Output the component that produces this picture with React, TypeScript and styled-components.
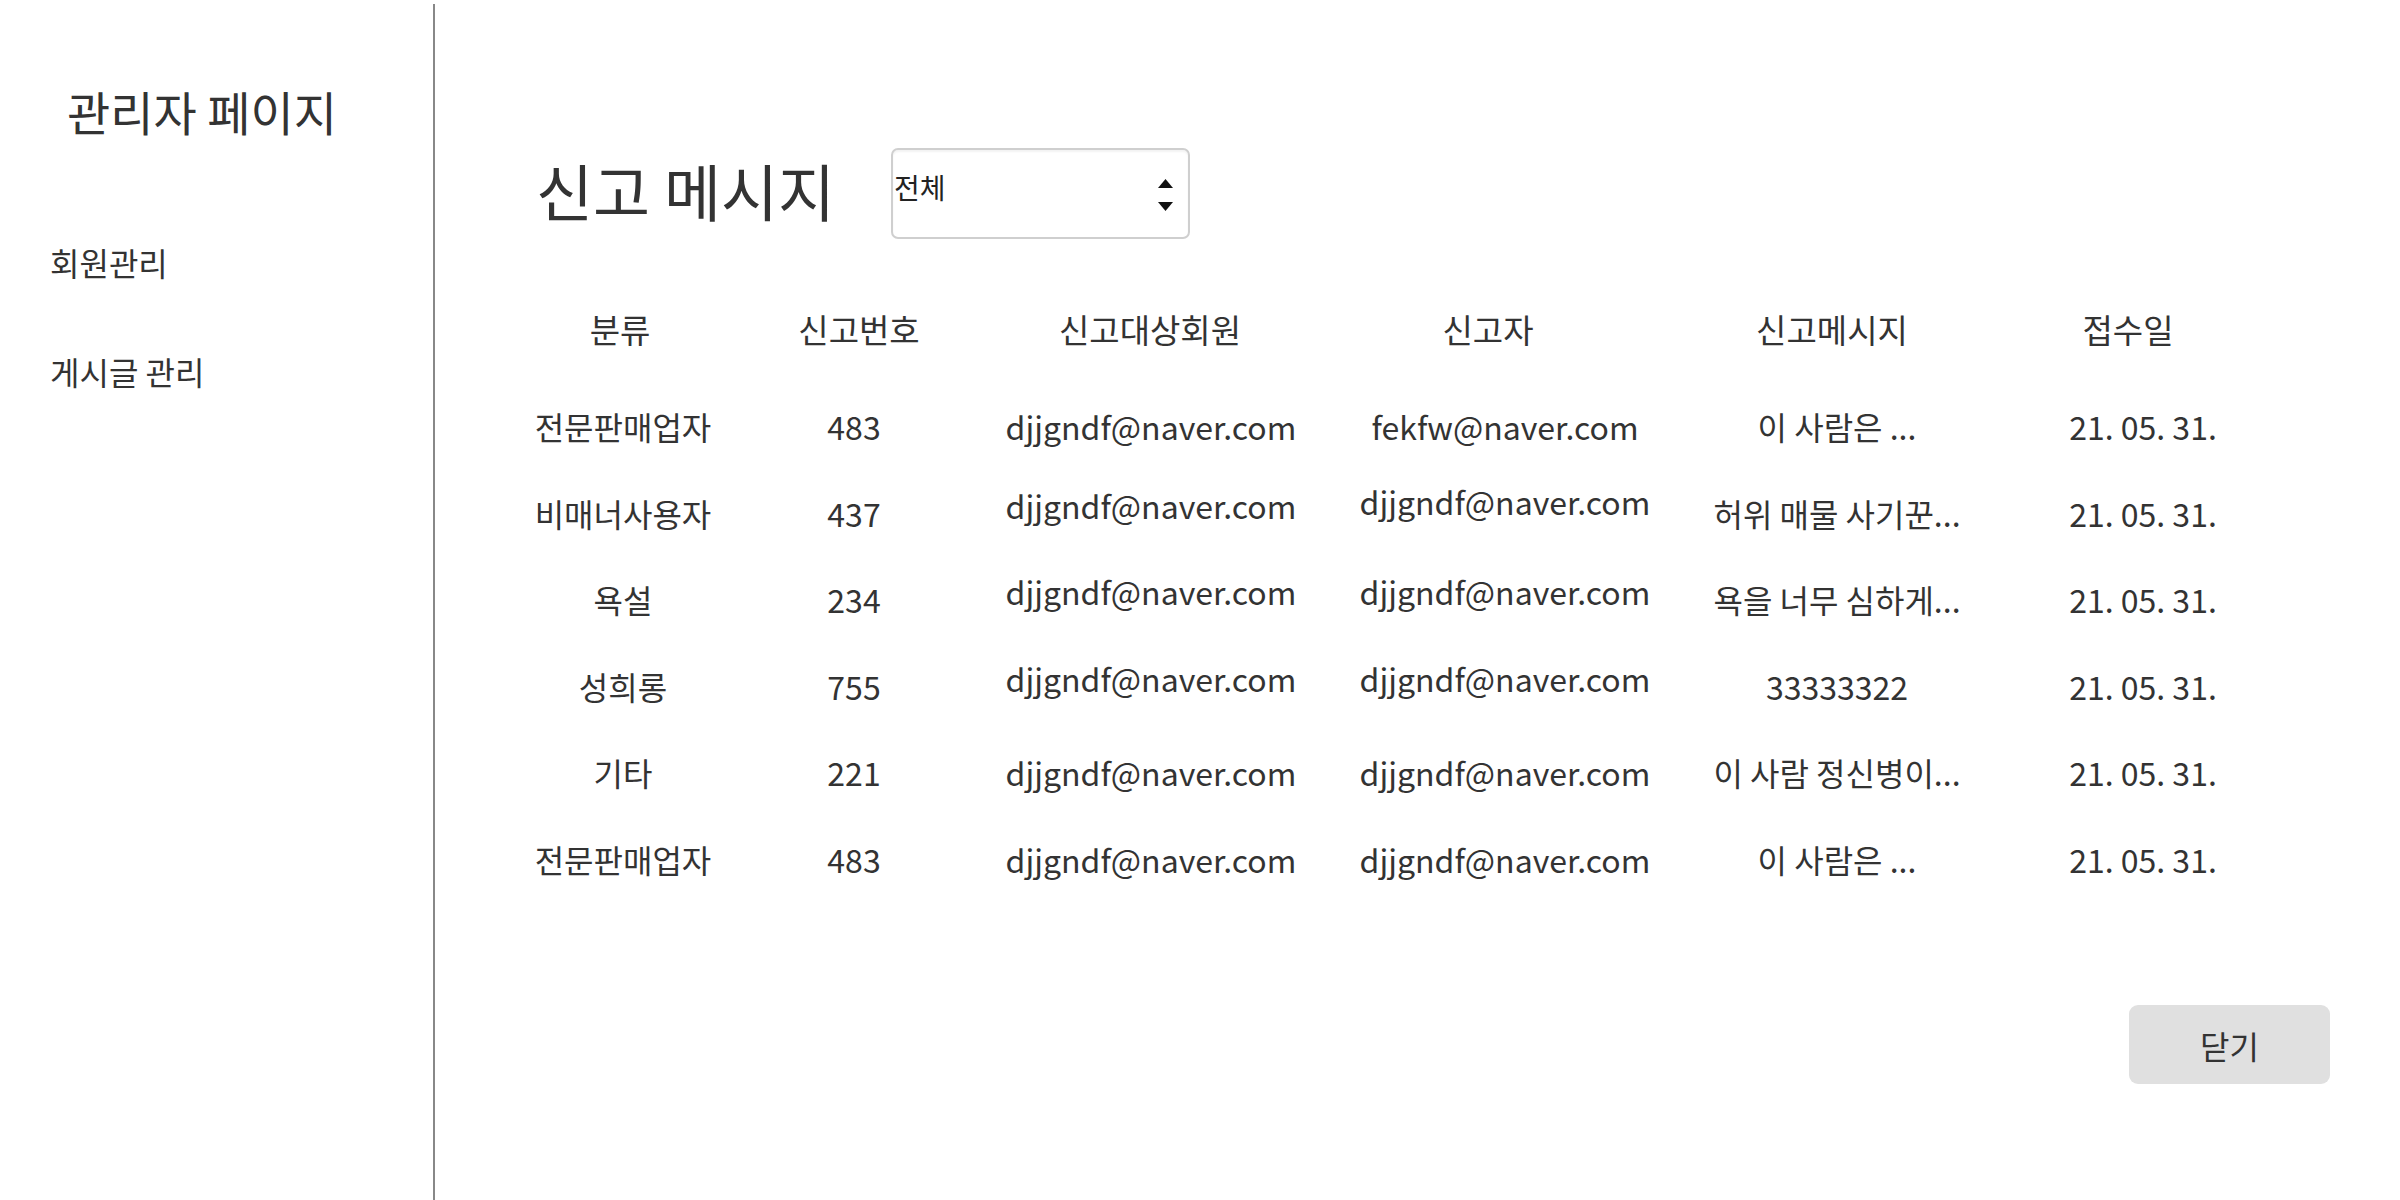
import React from "react";
import styled, { createGlobalStyle } from "styled-components";

const GlobalStyle = createGlobalStyle`
  html, body {
    margin: 0;
    padding: 0;
    background: #ffffff;
  }
  body {
    font-family: "Noto Sans CJK KR", "Noto Sans", sans-serif;
    color: #333333;
  }
  * { box-sizing: border-box; }
`;

const Page = styled.div`
  display: flex;
  width: 2400px;
  height: 1200px;
  padding-top: 4px;
  overflow: hidden;
`;

const Sidebar = styled.nav`
  width: 435px;
  flex-shrink: 0;
  border-right: 2px solid #888888;
  padding: 80px 0 0 50px;
  display: flex;
  flex-direction: column;
`;

const SideTitle = styled.h1`
  margin: 0 0 0 17px;
  font-size: 47px;
  font-weight: 400;
  line-height: 53px;
  color: #333333;
`;

const Menu = styled.ul`
  list-style: none;
  margin: 105px 0 0 0;
  padding: 0;
  display: flex;
  flex-direction: column;
  gap: 69px;
`;

const MenuItem = styled.li`
  font-size: 32px;
  line-height: 40px;
  color: #333333;
`;

const Main = styled.main`
  flex: 1;
  display: flex;
  flex-direction: column;
  padding: 0 70px 0 65px;
`;

const TitleRow = styled.div`
  display: flex;
  align-items: center;
  gap: 56px;
  margin: 144px 0 0 36px;
`;

const Title = styled.h2`
  margin: 0 0 6px 0;
  font-size: 62px;
  font-weight: 400;
  line-height: 85px;
  color: #333333;
`;

const SelectWrap = styled.div`
  position: relative;
  width: 299px;
  height: 91px;
`;

const Select = styled.select`
  appearance: none;
  -webkit-appearance: none;
  width: 100%;
  height: 100%;
  border: 2px solid #cfcfcf;
  border-radius: 7px;
  background: #ffffff;
  font-family: "Noto Sans CJK KR", sans-serif;
  font-size: 28px;
  color: #222222;
  padding: 0 0 14px 1px;
  outline: none;
  box-shadow: inset 0 2px 2px rgba(0, 0, 0, 0.05);
`;

const Arrows = styled.svg`
  position: absolute;
  right: 17px;
  top: 31px;
  pointer-events: none;
`;

const Table = styled.div`
  display: flex;
  flex-direction: column;
  margin-top: 46px;
`;

const Row = styled.div<{ $header?: boolean }>`
  display: grid;
  grid-template-columns: 246px 216px 378px 330px 334px 278px;
  height: ${(p) => (p.$header ? "87px" : "86.5px")};
  margin-bottom: ${(p) => (p.$header ? "11px" : "0")};
`;

const Cell = styled.div<{ $raise?: number; $shift?: number; $header?: boolean }>`
  display: flex;
  align-items: center;
  justify-content: center;
  font-size: ${(p) => (p.$header ? "33px" : "32px")};
  line-height: 40px;
  color: #333333;
  white-space: nowrap;
  padding-bottom: ${(p) => (p.$raise ? p.$raise * 2 : 0)}px;
  padding-left: ${(p) => (p.$shift && p.$shift > 0 ? p.$shift * 2 : 0)}px;
  padding-right: ${(p) => (p.$shift && p.$shift < 0 ? -p.$shift * 2 : 0)}px;
`;

const Footer = styled.div`
  display: flex;
  justify-content: flex-end;
  margin-top: 103px;
`;

const CloseButton = styled.button`
  width: 201px;
  height: 79px;
  border: none;
  border-radius: 9px;
  background: #e0e0e0;
  font-family: "Noto Sans CJK KR", sans-serif;
  font-size: 32px;
  color: #333333;
  cursor: pointer;
`;

type Report = {
  category: string;
  no: string;
  target: string;
  reporter: string;
  message: string;
  date: string;
  raiseTarget?: number;
  raiseReporter?: number;
};

const reports: Report[] = [
  { category: "전문판매업자", no: "483", target: "djjgndf@naver.com", reporter: "fekfw@naver.com", message: "이 사람은 ...", date: "21. 05. 31." },
  { category: "비매너사용자", no: "437", target: "djjgndf@naver.com", reporter: "djjgndf@naver.com", message: "허위 매물 사기꾼...", date: "21. 05. 31.", raiseTarget: 8, raiseReporter: 12 },
  { category: "욕설", no: "234", target: "djjgndf@naver.com", reporter: "djjgndf@naver.com", message: "욕을 너무 심하게...", date: "21. 05. 31.", raiseTarget: 8, raiseReporter: 8 },
  { category: "성희롱", no: "755", target: "djjgndf@naver.com", reporter: "djjgndf@naver.com", message: "33333322", date: "21. 05. 31.", raiseTarget: 8, raiseReporter: 8 },
  { category: "기타", no: "221", target: "djjgndf@naver.com", reporter: "djjgndf@naver.com", message: "이 사람 정신병이...", date: "21. 05. 31." },
  { category: "전문판매업자", no: "483", target: "djjgndf@naver.com", reporter: "djjgndf@naver.com", message: "이 사람은 ...", date: "21. 05. 31." },
];

const headers: { label: string; shift: number }[] = [
  { label: "분류", shift: -3 },
  { label: "신고번호", shift: 5 },
  { label: "신고대상회원", shift: -1 },
  { label: "신고자", shift: -17 },
  { label: "신고메시지", shift: -5 },
  { label: "접수일", shift: -15 },
];

export default function App() {
  return (
    <>
      <GlobalStyle />
      <Page>
        <Sidebar>
          <SideTitle>관리자 페이지</SideTitle>
          <Menu>
            <MenuItem>회원관리</MenuItem>
            <MenuItem>게시글 관리</MenuItem>
          </Menu>
        </Sidebar>
        <Main>
          <TitleRow>
            <Title>신고 메시지</Title>
            <SelectWrap>
              <Select defaultValue="all">
                <option value="all">전체</option>
                <option value="seller">전문판매업자</option>
                <option value="manner">비매너사용자</option>
                <option value="abuse">욕설</option>
                <option value="harass">성희롱</option>
                <option value="etc">기타</option>
              </Select>
              <Arrows width="15" height="33" viewBox="0 0 15 33">
                <polygon points="7.5,0 15,9 0,9" fill="#111" />
                <polygon points="0,23 15,23 7.5,32" fill="#111" />
              </Arrows>
            </SelectWrap>
          </TitleRow>
          <Table>
            <Row $header>
              {headers.map((h) => (
                <Cell key={h.label} $header $shift={h.shift}>
                  {h.label}
                </Cell>
              ))}
            </Row>
            {reports.map((r, i) => (
              <Row key={i}>
                <Cell>{r.category}</Cell>
                <Cell>{r.no}</Cell>
                <Cell $raise={r.raiseTarget}>{r.target}</Cell>
                <Cell $raise={r.raiseReporter}>{r.reporter}</Cell>
                <Cell>{r.message}</Cell>
                <Cell>{r.date}</Cell>
              </Row>
            ))}
          </Table>
          <Footer>
            <CloseButton>닫기</CloseButton>
          </Footer>
        </Main>
      </Page>
    </>
  );
}
